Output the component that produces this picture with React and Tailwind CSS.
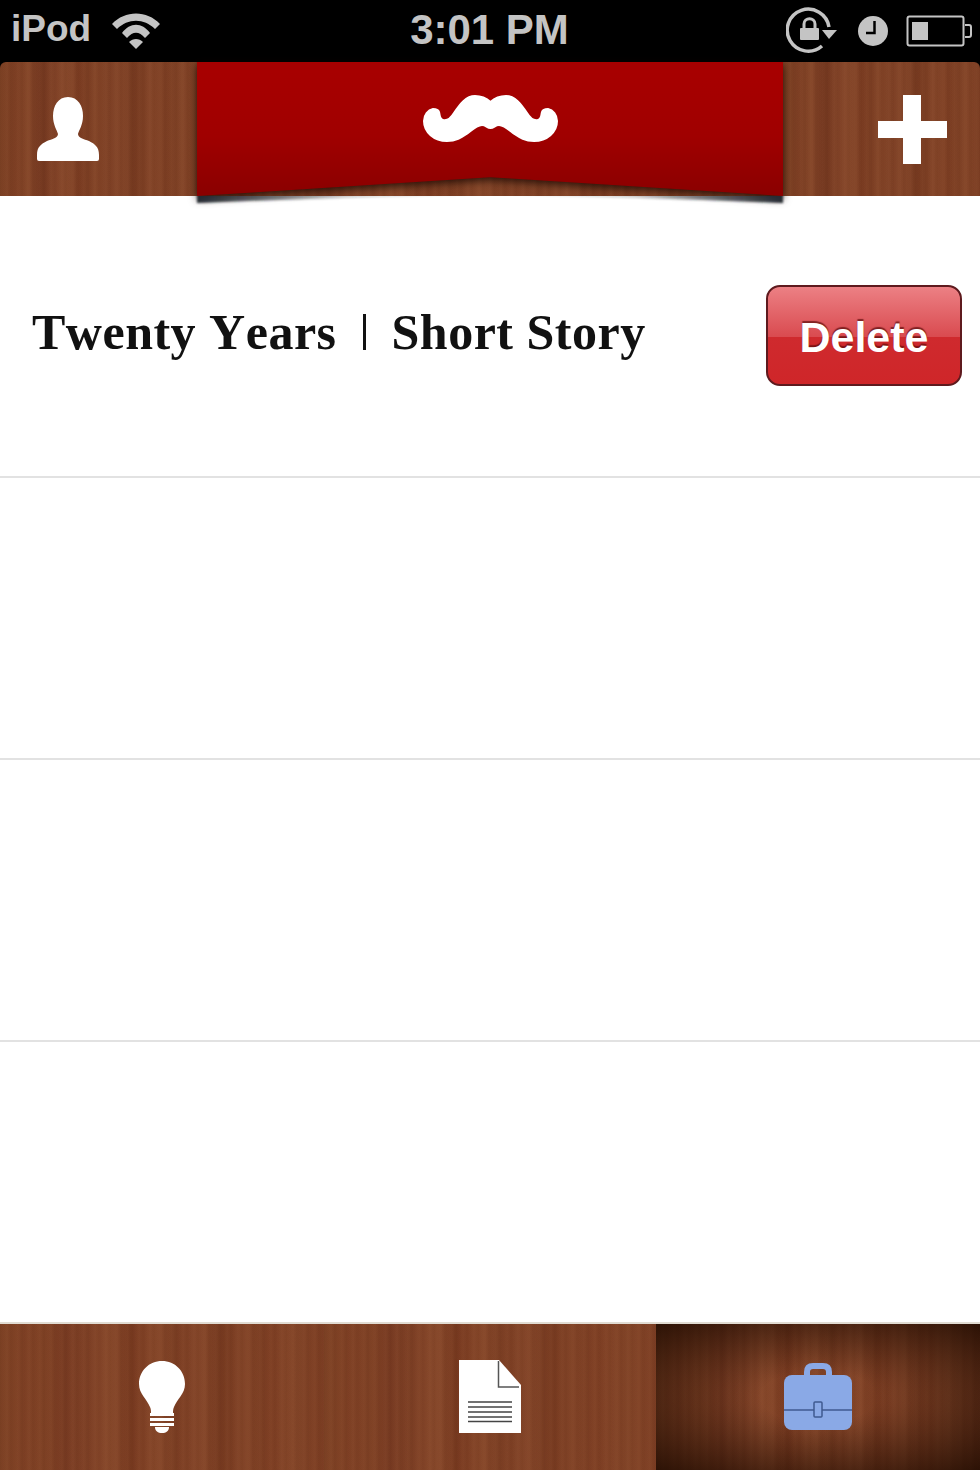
import React from 'react';

const wood =
  'bg-[repeating-linear-gradient(90deg,rgba(60,20,0,0.05)_0px,rgba(60,20,0,0)_3px,rgba(255,190,140,0.03)_7px,rgba(60,20,0,0.05)_11px),repeating-linear-gradient(90deg,rgba(60,20,0,0.07)_0px,rgba(60,20,0,0)_14px,rgba(255,190,140,0.02)_29px,rgba(60,20,0,0.06)_43px),linear-gradient(90deg,#824527_0%,#7b3d22_8%,#834427_14%,#753820_20%,#814227_27%,#854629_34%,#7a3b21_40%,#844528_48%,#7d3f24_55%,#834428_63%,#773a20_69%,#824327_76%,#7d3e23_84%,#854629_92%,#793b21_100%)]';

const grey = '#c4c4c4';

const PersonIcon = () => (
  <svg width="62" height="64" viewBox="0 0 62 64" fill="#fff">
    <path d="M31 0C41 0 46 9 46 19C46 28 42 33 41 37C41 41 47 42 52 44C58 47 62 50 62 58L62 62Q62 64 60 64L2 64Q0 64 0 62L0 58C0 50 4 47 10 44C15 42 21 41 21 37C20 33 16 28 16 19C16 9 21 0 31 0Z" />
  </svg>
);

const Moustache = () => (
  <svg width="135" height="47" viewBox="-1 -1 135 47" fill="#fff" stroke="#fff" strokeWidth="2">
    <path d="M66.5 6C61 1 57 0 51 0C42 0 36 8 30 17C27 22 23 25 19 24C15 23 16 19 15 16C14 13 11 13 9 13C4 14 0 19 0 25C0 36 10 45 23 45C33 45 38 41 44 37C49 33 53 29 58 29C62 29 63 32 66.5 32C70 32 71 29 75 29C80 29 84 33 89 37C95 41 100 45 110 45C123 45 133 36 133 25C133 19 129 14 124 13C122 13 119 13 118 16C117 19 118 23 114 24C110 25 106 22 103 17C97 8 91 0 82 0C76 0 72 1 66.5 6Z" />
  </svg>
);

const PlusIcon = () => (
  <svg width="69" height="69" viewBox="0 0 69 69" fill="#fff">
    <path d="M25 0H43V26H69V43H43V69H25V43H0V26H25Z" />
  </svg>
);

const WifiIcon = () => (
  <svg width="48" height="36" viewBox="0 0 48 36" fill={grey}>
    <path d="M0 11C13 -3 35 -3 48 11L43 16C32 5 16 5 5 16Z" />
    <path d="M10 20C18 9 30 9 38 20L33 25C27 18 21 18 15 25Z" />
    <path d="M24 36L17 29C21 25 27 25 31 29Z" />
  </svg>
);

const RotationLock = () => (
  <svg width="54" height="50" viewBox="0 0 54 50" fill="none">
    <path d="M43 21A21 21 0 1 0 36 40" stroke={grey} strokeWidth="3.5" />
    <path d="M36 24H51L43 33Z" fill={grey} />
    <rect x="14" y="22" width="19" height="12" rx="1" fill={grey} />
    <path d="M18 22V18C18 11 29 11 29 18V22" stroke={grey} strokeWidth="3" />
  </svg>
);

const ClockIcon = () => (
  <svg width="30" height="30" viewBox="0 0 30 30">
    <circle cx="15" cy="15" r="15" fill={grey} />
    <path d="M16.5 5V17H8" fill="none" stroke="#000" strokeWidth="2.5" />
  </svg>
);

const BatteryIcon = () => (
  <svg width="66" height="32" viewBox="0 0 66 32" fill="none">
    <rect x="1.5" y="1.5" width="56" height="29" rx="2" stroke={grey} strokeWidth="2" />
    <rect x="6" y="7" width="16" height="18" fill={grey} />
    <path d="M59 10H63Q65 10 65 12V20Q65 22 63 22H59" stroke={grey} strokeWidth="2" />
  </svg>
);

const BulbIcon = () => (
  <svg width="46" height="72" viewBox="0 0 46 72">
    <path d="M23 0C36 0 46 10 46 23C46 33 38 38 35 46C34 48 34 50 34 52H12C12 50 12 48 11 46C8 38 0 33 0 23C0 10 10 0 23 0Z" fill="#fff" />
    <rect x="11" y="52" width="24" height="3" fill="#fff" />
    <rect x="11" y="57" width="24" height="3" fill="#fff" />
    <rect x="11" y="62" width="24" height="3" fill="#fff" />
    <path d="M16 66H30C30 70 27 72 23 72C19 72 16 70 16 66Z" fill="#fff" />
  </svg>
);

const DocIcon = () => (
  <svg width="62" height="73" viewBox="0 0 62 73">
    <path d="M0 0H40L62 25V73H0Z" fill="#fff" />
    <path d="M39.5 1V27H60" fill="none" stroke="#555" strokeWidth="1.5" />
    <path d="M9 42H53M9 47H53M9 52H53M9 57H53M9 61.5H53" stroke="#444" strokeWidth="1.3" />
  </svg>
);

const BriefcaseIcon = () => (
  <svg width="68" height="67" viewBox="0 0 68 67">
    <path d="M23 14V9Q23 3 29 3H39Q45 3 45 9V14" fill="none" stroke="#8aa9e6" strokeWidth="6" />
    <rect x="0" y="12" width="68" height="55" rx="8" fill="#8aa9e6" />
    <path d="M0 47H68" stroke="#3f5a90" strokeWidth="1.5" />
    <rect x="30" y="39" width="8" height="15" rx="1" fill="#8aa9e6" stroke="#3f5a90" strokeWidth="1.5" />
  </svg>
);

const Row = ({ children }) => (
  <div className="h-[282px] flex items-center justify-between pl-8 pr-[18px] border-b-2 border-[#e2e2e2]">
    {children}
  </div>
);

export default function App() {
  return (
    <div className="w-[980px] h-[1470px] flex flex-col bg-white overflow-hidden">
      <div className="h-[62px] bg-black flex items-center justify-between pl-[11px] pr-2 text-[#c4c4c4] font-['Liberation_Sans',sans-serif] font-bold">
        <div className="w-[300px] flex items-center gap-[21px] text-[37px]">
          <span className="-mt-1">iPod</span>
          <WifiIcon />
        </div>
        <span className="text-[42px] -mt-1 -ml-1">3:01 PM</span>
        <div className="w-[300px] flex items-center justify-end gap-[18px]">
          <RotationLock />
          <ClockIcon />
          <BatteryIcon />
        </div>
      </div>

      <div className="relative h-[134px] flex bg-black">
        <div className={`w-[197px] flex items-center pl-[37px] rounded-tl-md ${wood}`}>
          <PersonIcon />
        </div>
        <div className={`flex-1 ${wood}`}>
          <div className="h-full [filter:drop-shadow(0_3px_4px_rgba(20,5,0,0.8))]">
            <div className="h-full flex justify-center pt-[33px] bg-[linear-gradient(180deg,#a80000_0%,#a00000_55%,#8a0000_100%)] [clip-path:polygon(0_0,100%_0,100%_100%,50%_86%,0_100%)]">
              <Moustache />
            </div>
          </div>
        </div>
        <div className={`w-[197px] flex items-center justify-end pr-[33px] rounded-tr-md ${wood}`}>
          <PlusIcon />
        </div>
        {/* fold shadow falling on the white page */}
        <svg className="absolute left-[190px] top-[134px]" width="600" height="16" viewBox="0 0 600 16">
          <defs>
            <linearGradient id="fold" x1="0" x2="1" y1="0" y2="0">
              <stop offset="0" stopColor="#20252c" stopOpacity="0.95" />
              <stop offset="0.25" stopColor="#20252c" stopOpacity="0.2" />
              <stop offset="0.5" stopColor="#20252c" stopOpacity="0" />
              <stop offset="0.75" stopColor="#20252c" stopOpacity="0.2" />
              <stop offset="1" stopColor="#20252c" stopOpacity="0.95" />
            </linearGradient>
            <filter id="soft">
              <feGaussianBlur stdDeviation="1.2" />
            </filter>
          </defs>
          <path d="M7 -4H593V7Q450 1 300 -1Q150 1 7 7Z" fill="url(#fold)" filter="url(#soft)" />
        </svg>
      </div>

      <div className="flex-1">
        <Row>
          <div className="font-['Liberation_Serif',serif] font-bold text-[50px] tracking-[0.5px] text-[#111] flex items-center mb-2 [font-kerning:none]">
            <span>Twenty Years</span>
            <span className="w-[3px] h-[36px] bg-[#111] mx-[26px]" />
            <span>Short Story</span>
          </div>
          <button className="w-[196px] h-[101px] mb-[2px] pt-1 rounded-[14px] border-2 border-[#5e1a1e] bg-[linear-gradient(180deg,#ec8084_0%,#d94a4f_52%,#cf2a2e_52%,#cf2629_100%)] text-white font-['Liberation_Sans',sans-serif] font-bold text-[43px] [text-shadow:0_-2px_1px_rgba(90,10,10,0.7)]">
            Delete
          </button>
        </Row>
        <Row />
        <Row />
      </div>

      <div className="h-[148px] grid grid-cols-[324px_332px_324px] border-t-2 border-[#e0dbd2]">
        <div className={`flex justify-center pt-[37px] ${wood}`}>
          <BulbIcon />
        </div>
        <div className={`flex justify-center pt-[36px] ${wood}`}>
          <DocIcon />
        </div>
        <div className={`relative flex justify-center pt-[39px] ${wood}`}>
          <div className="absolute inset-0 bg-[radial-gradient(ellipse_at_center,rgba(30,10,0,0)_25%,rgba(30,10,0,0.85)_100%)]" />
          <div className="relative h-fit">
            <BriefcaseIcon />
          </div>
        </div>
      </div>
    </div>
  );
}
